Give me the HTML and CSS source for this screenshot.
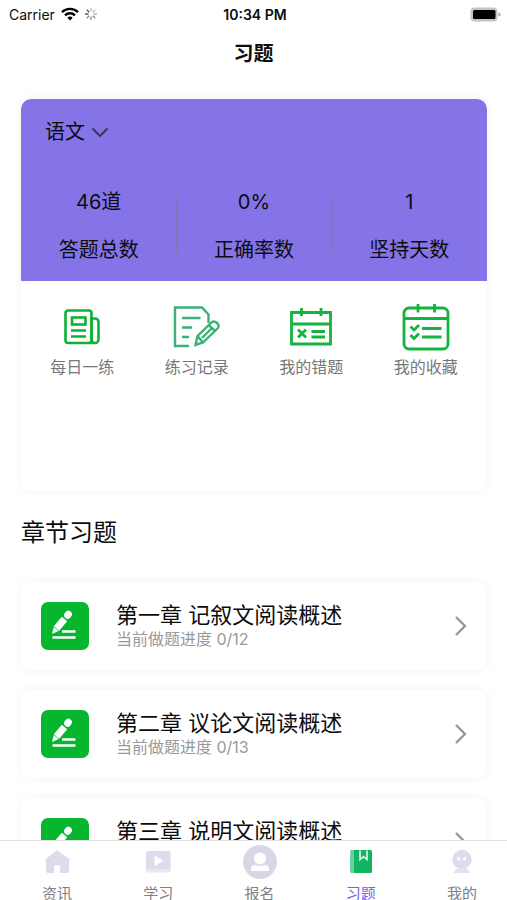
FILE: index.html
```html
<!DOCTYPE html>
<html lang="zh-CN">
<head>
<meta charset="utf-8">
<meta name="viewport" content="width=device-width, initial-scale=1">
<title>习题</title>
<link rel="stylesheet" href="styles.css">
</head>
<body>
<svg class="defs" aria-hidden="true">
  <symbol id="edit" viewBox="0 0 48 48">
    <path d="M11 32l1.800-7 4.800 4z" fill="#fff"/>
    <path d="M15.500 26.500l8-9.500" stroke="#fff" stroke-width="7" fill="none"/>
    <path d="M26.600 13.300l.8-1" stroke="#fff" stroke-width="7" stroke-linecap="round" fill="none"/>
    <path d="M21 29.500h13.500M11.500 35.500h23" stroke="#fff" stroke-width="2.600" fill="none"/>
  </symbol>
  <symbol id="next" viewBox="0 0 14 22">
    <path d="M2 2l9 9-9 9" fill="none" stroke="#999" stroke-width="2.400"/>
  </symbol>
</svg>
<header>
  <div class="status">
    <div class="carrier">
      <span>Carrier</span>
      <svg width="18" height="14" viewBox="0 0 18 14" fill="none" stroke="#000" stroke-width="2.400"><path d="M1 5.200a11.400 11.400 0 0 1 16 0M4 8.300a7.200 7.200 0 0 1 10 0"/><path d="M6.300 10.700a3.900 3.900 0 0 1 5.400 0L9 13.500z" fill="#000" stroke="none"/></svg>
      <svg width="12" height="12" viewBox="0 0 12 12" fill="none" stroke-width="1.300"><path d="M6 0v3.500M10.200 1.800L7.800 4.200M12 6H8.500" stroke="#bbb"/><path d="M10.200 10.200L7.800 7.800M6 12V8.500M1.800 10.200l2.400-2.400" stroke="#888"/><path d="M0 6h3.500M1.800 1.800l2.400 2.400" stroke="#555"/></svg>
    </div>
    <time>10:34 PM</time>
    <div class="battery"><svg width="31" height="15" viewBox="0 0 31 15"><rect x=".5" y=".5" width="27" height="14" rx="4" fill="#c4c4c4"/><rect x="3" y="3" width="22.500" height="9" rx="1.500"/><path d="M28.500 5.300q2.200 1 2.200 2.200t-2.200 2.200z" fill="#aaa"/></svg></div>
  </div>
  <h1>习题</h1>
</header>
<main>
  <section class="card summary">
    <div class="hero">
      <div class="subject">
        <select aria-label="科目"><option>语文</option></select>
        <svg width="18" height="11" viewBox="0 0 18 11" fill="none" stroke="#3c3558" stroke-width="2"><path d="M1.500 1.500L9 9l7.500-7.500"/></svg>
      </div>
      <dl class="stats">
        <div><dd>46道</dd><dt>答题总数</dt></div>
        <div><dd>0%</dd><dt>正确率数</dt></div>
        <div><dd>1</dd><dt>坚持天数</dt></div>
      </dl>
    </div>
    <div class="actions">
      <button type="button"><span class="pic"><svg width="36" height="36" viewBox="0 0 36 36" fill="none" stroke="#0eb231" stroke-width="2.600"><rect x="1.500" y="1.500" width="26" height="32.500" rx="2.500"/><path d="M27.500 9.500H31a3.500 3.500 0 0 1 3.500 3.500v17.500A3.500 3.500 0 0 1 31 34h-6M27.500 9v21q0 4 3 4"/><rect x="8" y="8.500" width="13.500" height="7"/><path d="M7 21.500h15M7 27.500h15"/></svg></span>每日一练</button>
      <button type="button"><span class="pic"><svg width="48" height="42" viewBox="0 0 48 42" fill="none" stroke="#3bb077" stroke-width="2.400"><path d="M16 40H2V1.500H29l6.500 7V17M9 12h18.500M9 21.500h10M9 31h7"/><path d="M22.500 39l2-9 14-13.500q2.500-2 5.500 .5t.5 5.500L30 36.500zM24.500 30l5.500 6.500M35.500 19l6 5.500M29 32l9-9"/></svg></span>练习记录</button>
      <button type="button"><span class="pic"><svg width="42" height="38" viewBox="0 0 42 38" fill="none" stroke="#14b340" stroke-width="2.800"><path d="M1.500 4.500h39v31.500h-39zM1.500 16h39M11.500 0v8M31 0v8M21.500 23.500H35M21.500 29H35"/><path d="M8 21.500l8 8M16 21.500l-8 8"/></svg></span>我的错题</button>
      <button type="button"><span class="pic"><svg width="48" height="48" viewBox="0 0 48 48" fill="none" stroke="#14b340" stroke-width="2.800"><rect x="2" y="5" width="44" height="41" rx="5"/><path d="M2 15.500h44M16 1v8.500M32.500 1v8.500M20 25.500h19.500M20 34h19.500M8.500 23.500l3.500 3.500 5-5M8.500 32l3.500 3.500 5-5"/></svg></span>我的收藏</button>
    </div>
  </section>
  <h2>章节习题</h2>
  <ul class="chapters">
    <li><a class="card chapter" href="#c1"><span class="badge"><svg><use href="#edit"/></svg></span><span class="info"><strong>第一章 记叙文阅读概述</strong><small>当前做题进度 0/12</small></span><svg class="next"><use href="#next"/></svg></a></li>
    <li><a class="card chapter" href="#c2"><span class="badge"><svg><use href="#edit"/></svg></span><span class="info"><strong>第二章 议论文阅读概述</strong><small>当前做题进度 0/13</small></span><svg class="next"><use href="#next"/></svg></a></li>
    <li><a class="card chapter" href="#c3"><span class="badge"><svg><use href="#edit"/></svg></span><span class="info"><strong>第三章 说明文阅读概述</strong></span><svg class="next"><use href="#next"/></svg></a></li>
  </ul>
</main>
<nav>
  <a href="#news"><svg viewBox="0 0 34 34"><path d="M17 4L4 14.500h2V25q0 2 2 2h19q2 0 2-2V14.500h2z" fill="#dedbec"/><path d="M14 27v-6q0-2 3-2t3 2v6z" fill="#fff"/></svg>资讯</a>
  <a href="#learn"><svg viewBox="0 0 34 34"><rect x="5" y="5" width="24.500" height="21" rx="2" fill="#dedbec"/><path d="M5 23h24.500v1.500q0 2-2 2H7q-2 0-2-2z" fill="#e9e7f2"/><path d="M13.500 9l8.500 5.500-8.500 6z" fill="#fff"/></svg>学习</a>
  <a href="#apply"><svg viewBox="0 0 34 34"><circle cx="17" cy="16" r="17" fill="#d9d6e8"/><circle cx="17" cy="12.500" r="6" fill="#fff"/><path d="M8 25v-2q0-4 5-4 4 2 8 0 5 0 5 4v2z" fill="#fff"/></svg>报名</a>
  <a href="#practice" class="active"><svg viewBox="0 0 34 34"><rect x="6.500" y="4" width="21.500" height="23" rx="1.500" fill="#12b464"/><path d="M6.500 5.500q0-1.500 1.500-1.500h2v23H8q-1.500 0-1.500-1.500z" fill="#66d39b"/><path d="M16 4.500v9l3.500-3 3.500 3v-9" fill="none" stroke="#d9f5e6" stroke-width="1.700"/></svg>习题</a>
  <a href="#me"><svg viewBox="0 0 34 34"><circle cx="17" cy="13.500" r="9.700" fill="#dedbec"/><path d="M9 27q0-3 5-5h6q5 2 5 5z" fill="#e3e0ef"/><path d="M13 11v3.500M15 11l-1.500 1.700 1.500 1.800M19 11v3.500M21 11l-1.500 1.700 1.500 1.800" fill="none" stroke="#fff" stroke-width="1.200"/></svg>我的</a>
</nav>
</body>
</html>
```
FILE: styles.css
```css
* { box-sizing: border-box; }
body {
  margin: 0;
  height: 100vh;
  display: flex;
  flex-direction: column;
  overflow: hidden;
  background: #fff;
  color: #0c0c0c;
  font-family: Inter, "Noto Sans CJK SC", sans-serif;
}
h1, h2, dl, dd, ul { margin: 0; padding: 0; }
a { color: inherit; text-decoration: none; }
button, select { font: inherit; color: inherit; background: none; border: 0; padding: 0; }
svg { display: block; flex: none; }
.defs { position: absolute; width: 0; height: 0; }

.status {
  display: grid;
  grid-template-columns: 1fr auto 1fr;
  align-items: center;
  height: 28px;
  padding: 0 6px 0 9px;
  font-size: 14px;
}
.carrier { display: flex; align-items: center; gap: 6px; }
.status time { font-weight: 600; }
.battery { justify-self: end; }
h1 {
  height: 48px;
  padding-top: 2px;
  line-height: 48px;
  text-align: center;
  font-size: 20px;
  font-weight: 700;
}

main { flex: 1; min-height: 0; overflow: hidden; padding: 23px 20px 0 21px; }
.card { background: #fff; border-radius: 10px; box-shadow: 0 0 12px rgba(0, 0, 0, 0.05); }
.summary { min-height: 392px; overflow: hidden; }
.hero { height: 182px; padding-top: 17px; background: #8474e8; }
.subject { display: flex; align-items: center; gap: 6px; padding-left: 24px; height: 32px; }
.subject select { appearance: none; font-size: 20px; line-height: 32px; }
.stats { display: grid; grid-template-columns: repeat(3, 1fr); margin-top: 40px; font-size: 20px; }
.stats div {
  display: flex;
  flex-direction: column;
  gap: 20px;
  text-align: center;
  line-height: 28px;
}
.stats div + div { background: linear-gradient(#8577bd, #8577bd) left 7px / 2px 60px no-repeat; }

.actions { display: grid; grid-template-columns: repeat(4, 1fr); padding: 20px 4px 0; }
.actions button {
  display: flex;
  flex-direction: column;
  align-items: center;
  font-size: 16px;
  line-height: 28px;
  color: #777;
}
.pic { display: grid; place-items: center; height: 52px; }

h2 { margin: 24px 0 31px; font-size: 24px; font-weight: 400; line-height: 36px; }
.chapters { display: grid; gap: 20px; list-style: none; }
.chapter { display: flex; align-items: center; height: 88px; padding: 0 19px 0 20px; }
.badge { width: 48px; height: 48px; border-radius: 7px; background: #05b62e; }
.badge svg { width: 48px; height: 48px; }
.info { flex: 1; align-self: flex-start; display: flex; flex-direction: column; padding: 20px 0 0 27px; }
.info strong { font-size: 22px; font-weight: 400; line-height: 26px; }
.info small { font-size: 16px; line-height: 22px; color: #999; }
.next { width: 14px; height: 22px; }

nav {
  position: relative;
  display: flex;
  justify-content: space-between;
  height: 60px;
  padding: 5px 28px 0 40px;
  overflow: hidden;
  background: #fff;
  border-top: 1px solid #e2e2e2;
}
nav a {
  display: flex;
  flex-direction: column;
  align-items: center;
  width: 34px;
  gap: 3px;
  font-size: 15px;
  line-height: 22px;
  color: #808080;
  white-space: nowrap;
}
nav svg { width: 34px; height: 34px; overflow: visible; }
nav .active { color: #7463e6; }
```
